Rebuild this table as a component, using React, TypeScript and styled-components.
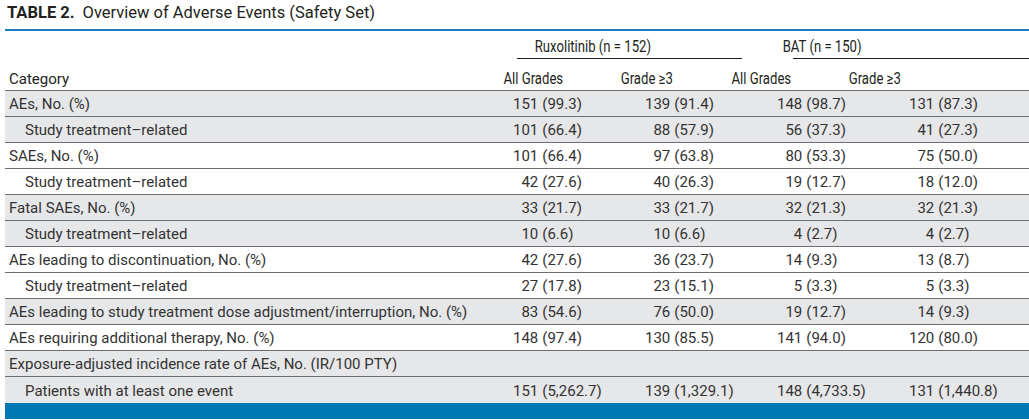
import styled, { createGlobalStyle } from "styled-components"

const GlobalStyle = createGlobalStyle`
  html, body {
    margin: 0;
    padding: 0;
    background: #fff;
  }
`

const Page = styled.div`
  width: 1029px;
  height: 420px;
  overflow: hidden;
  padding-left: 5px;
  box-sizing: border-box;
  font-family: Roboto, "Liberation Sans", sans-serif;
  color: #2d2d2d;
`

const Caption = styled.div`
  height: 31px;
  padding: 3px 0 0 2px;
  box-sizing: border-box;
  line-height: 20px;
  font-size: 16.5px;
  color: #231f20;
  border-bottom: 2px solid #1b7cc0;
`

const CaptionLabel = styled.span`
  font-weight: 700;
  margin-right: 8px;
`

const HeadGrid = styled.div`
  display: grid;
  grid-template-columns: 471px repeat(4, 114px) 1fr;
  font-size: 16px;
  color: #231f20;
`

// the journal uses a condensed face for the column heads
const Narrow = styled.span`
  display: inline-block;
  transform: scaleX(0.82);
  white-space: nowrap;
`

const Spanner = styled.div<{ $col: number; $shift?: number }>`
  grid-column: ${(p) => p.$col} / span 2;
  height: 27px;
  padding-top: 4px;
  padding-left: ${(p) => p.$shift ?? 0}px;
  box-sizing: border-box;
  line-height: 23px;
  text-align: center;
`

const RuleRow = styled.div`
  display: flex;
  gap: 51px;
  padding-left: 512px;
`

const Rule = styled.div<{ $width?: number }>`
  height: 1px;
  background: #231f20;
  ${(p) => (p.$width ? `width: ${p.$width}px;` : "flex: 1;")}
`

const ColHeads = styled(HeadGrid)`
  height: 32px;
  align-items: end;
  padding-bottom: 2px;
  box-sizing: border-box;
  border-bottom: 1px solid #6d6e71;
`

const ColHead = styled.div<{ $left?: boolean }>`
  line-height: 18px;
  text-align: ${(p) => (p.$left ? "left" : "center")};
  ${(p) => p.$left && "padding-left: 4px; font-size: 15px;"}
`

const Row = styled.div<{ $shade: boolean; $last?: boolean }>`
  display: grid;
  grid-template-columns: 495px repeat(4, 132px) 1fr;
  align-items: center;
  height: 26px;
  padding-top: 1px;
  box-sizing: border-box;
  font-size: 15px;
  background: ${(p) => (p.$shade ? "#e6e7e8" : "#fff")};
  border-bottom: ${(p) => (p.$last ? "none" : "1px solid #6d6e71")};
`

const Label = styled.div<{ $indent?: boolean }>`
  padding-left: ${(p) => (p.$indent ? 20 : 4)}px;
  white-space: nowrap;
  color: #333;
`

const Value = styled.div`
  padding-left: 13px;
  white-space: nowrap;
  color: #333;
`

const Count = styled.span`
  display: inline-block;
  width: 3ch;
  text-align: right;
  margin-right: 4px;
`

const BottomBar = styled.div`
  height: 16px;
  background: #0077b5;
`

type Cell = [string, string]

interface RowData {
  label: string
  indent?: boolean
  shade: boolean
  vals: Cell[]
}

const related = "Study treatment\u2013related"

const rows: RowData[] = [
  { label: "AEs, No. (%)", shade: true, vals: [["151", "99.3"], ["139", "91.4"], ["148", "98.7"], ["131", "87.3"]] },
  { label: related, indent: true, shade: true, vals: [["101", "66.4"], ["88", "57.9"], ["56", "37.3"], ["41", "27.3"]] },
  { label: "SAEs, No. (%)", shade: false, vals: [["101", "66.4"], ["97", "63.8"], ["80", "53.3"], ["75", "50.0"]] },
  { label: related, indent: true, shade: false, vals: [["42", "27.6"], ["40", "26.3"], ["19", "12.7"], ["18", "12.0"]] },
  { label: "Fatal SAEs, No. (%)", shade: true, vals: [["33", "21.7"], ["33", "21.7"], ["32", "21.3"], ["32", "21.3"]] },
  { label: related, indent: true, shade: true, vals: [["10", "6.6"], ["10", "6.6"], ["4", "2.7"], ["4", "2.7"]] },
  { label: "AEs leading to discontinuation, No. (%)", shade: false, vals: [["42", "27.6"], ["36", "23.7"], ["14", "9.3"], ["13", "8.7"]] },
  { label: related, indent: true, shade: false, vals: [["27", "17.8"], ["23", "15.1"], ["5", "3.3"], ["5", "3.3"]] },
  { label: "AEs leading to study treatment dose adjustment/interruption, No. (%)", shade: true, vals: [["83", "54.6"], ["76", "50.0"], ["19", "12.7"], ["14", "9.3"]] },
  { label: "AEs requiring additional therapy, No. (%)", shade: false, vals: [["148", "97.4"], ["130", "85.5"], ["141", "94.0"], ["120", "80.0"]] },
  { label: "Exposure-adjusted incidence rate of AEs, No. (IR/100 PTY)", shade: true, vals: [] },
  { label: "Patients with at least one event", indent: true, shade: true, vals: [["151", "5,262.7"], ["139", "1,329.1"], ["148", "4,733.5"], ["131", "1,440.8"]] },
]

export default function App() {
  return (
    <Page>
      <GlobalStyle />
      <Caption>
        <CaptionLabel>TABLE 2.</CaptionLabel>
        Overview of Adverse Events (Safety Set)
      </Caption>
      <HeadGrid>
        <Spanner $col={2} $shift={6}><Narrow>Ruxolitinib (n = 152)</Narrow></Spanner>
        <Spanner $col={4} $shift={8}><Narrow>BAT (n = 150)</Narrow></Spanner>
      </HeadGrid>
      <RuleRow>
        <Rule $width={225} />
        <Rule />
      </RuleRow>
      <ColHeads>
        <ColHead $left>Category</ColHead>
        <ColHead><Narrow>All Grades</Narrow></ColHead>
        <ColHead><Narrow>Grade ≥3</Narrow></ColHead>
        <ColHead><Narrow>All Grades</Narrow></ColHead>
        <ColHead><Narrow>Grade ≥3</Narrow></ColHead>
      </ColHeads>
      {rows.map((r, i) => (
        <Row key={i} $shade={r.shade} $last={i === rows.length - 1}>
          <Label $indent={r.indent}>{r.label}</Label>
          {r.vals.map(([n, pct], j) => (
            <Value key={j}>
              <Count>{n}</Count>({pct})
            </Value>
          ))}
        </Row>
      ))}
      <BottomBar />
    </Page>
  )
}
